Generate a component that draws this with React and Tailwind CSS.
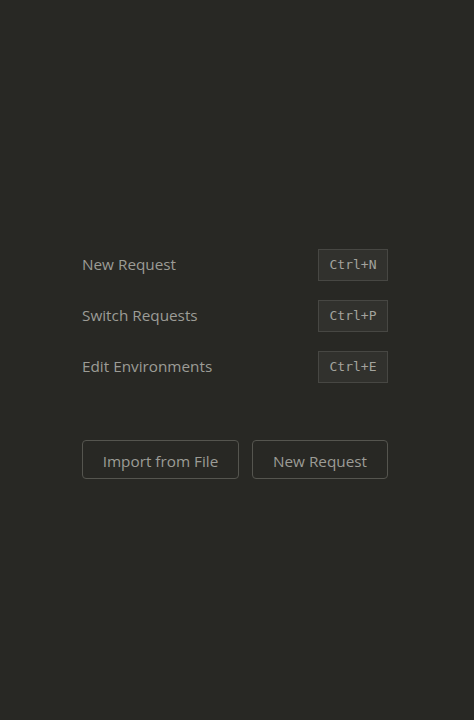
export default function App() {
  const shortcuts = [
    { label: "New Request", keys: "Ctrl+N" },
    { label: "Switch Requests", keys: "Ctrl+P" },
    { label: "Edit Environments", keys: "Ctrl+E" },
  ];

  return (
    <div
      className="flex h-[720px] w-full items-center justify-center bg-[#282824] pr-[4px] pt-[8px]"
      style={{ fontFamily: '"Open Sans", "Noto Sans", sans-serif' }}
    >
      <div className="flex w-[306px] flex-col">
        {/* Shortcuts */}
        <div className="flex flex-col gap-[19px]">
          {shortcuts.map((s) => (
            <div key={s.keys} className="flex items-center justify-between">
              <span className="-mt-[1px] text-[15.3px] text-[#9c9c96]">{s.label}</span>
              <kbd
                className="flex h-[32px] w-[70px] items-center justify-center border border-[#474743] bg-[#31312d] text-[13px] text-[#a3a39d]"
                style={{ fontFamily: '"DejaVu Sans Mono", monospace' }}
              >
                {s.keys}
              </kbd>
            </div>
          ))}
        </div>

        {/* Actions */}
        <div className="mt-[57px] flex gap-[13px]">
          <button className="h-[39px] w-[157px] rounded-[4px] border border-[#55554f] pt-[3px] text-[15.3px] text-[#9c9c96]">
            Import from File
          </button>
          <button className="h-[39px] w-[136px] rounded-[4px] border border-[#55554f] pt-[3px] text-[15.3px] text-[#9c9c96]">
            New Request
          </button>
        </div>
      </div>
    </div>
  );
}
